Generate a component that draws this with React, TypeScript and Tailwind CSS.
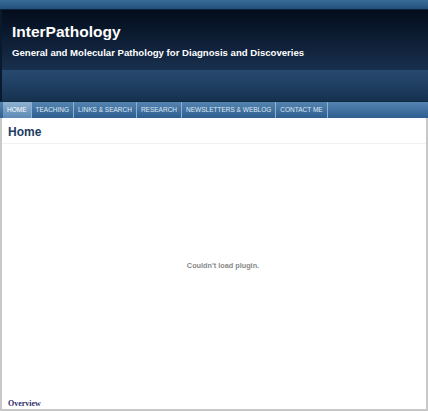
const tabs = ['HOME', 'TEACHING', 'LINKS & SEARCH', 'RESEARCH', 'NEWSLETTERS & WEBLOG', 'CONTACT ME']

export default function App() {
  return (
    <div className="w-[428px] h-[411px] flex flex-col bg-white overflow-hidden font-['Liberation_Sans',Arial,sans-serif]">
      {/* top strip */}
      <div className="h-[10px] bg-gradient-to-b from-[#3a6d99] to-[#22507c] border-b border-[#0d2238]" />
      {/* header */}
      <div className="h-[60px] bg-gradient-to-b from-[#050d1c] to-[#18304e] pl-[10px] pt-[12px] border-l-2 border-[#0a1a2e]">
        <div className="text-white font-bold text-[15.5px] leading-[19px]">InterPathology</div>
        <div className="text-white font-bold text-[9.6px] leading-[12px] mt-[6px]">
          General and Molecular Pathology for Diagnosis and Discoveries
        </div>
      </div>
      <div className="h-[31px] bg-gradient-to-b from-[#28496e] via-[#1f3f62] to-[#16314f] border-l-2 border-[#0a1a2e]" />
      {/* nav */}
      <div className="h-[17px] flex bg-gradient-to-b from-[#5584b0] to-[#2e5f90] pl-[3px] border-t border-[#0f2a45]">
        {tabs.map((t, i) => (
          <div
            key={t}
            className={
              'px-[4px] flex items-center text-[6.5px] leading-none text-[#dfe9f3] border-r border-[#8fb0cf] ' +
              (i === 0 ? 'bg-gradient-to-b from-[#8fb2d2] to-[#5d8ab5] text-white' : '')
            }
          >
            {t}
          </div>
        ))}
      </div>
      {/* content */}
      <div className="flex-1 flex flex-col border-l-2 border-r-2 border-b-2 border-[#c8c8c8]">
        <div className="px-[6px] pt-[6px] pb-[3px] border-b border-[#f0f0f0]">
          <div className="text-[#1d3d63] font-bold text-[12px] leading-[16px]">Home</div>
        </div>
        <div className="flex-1 flex items-center justify-center pl-[18px]">
          <div className="text-[#888888] font-bold text-[7.3px] mt-[-10px]">Couldn't load plugin.</div>
        </div>
        <div className="px-[6px] pb-0 mb-[-1px] text-[#2c2c6c] text-[8px] font-['Liberation_Serif',serif] font-bold">
          Overview
        </div>
      </div>
    </div>
  )
}
